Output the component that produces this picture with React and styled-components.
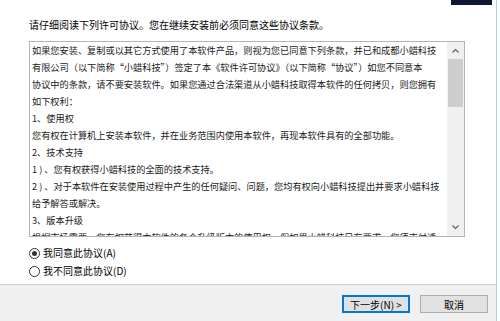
import React from 'react';
import styled, { createGlobalStyle } from 'styled-components';

const GlobalStyle = createGlobalStyle`
  html, body {
    margin: 0;
    padding: 0;
    background: #ffffff;
  }
  body {
    font-family: "Noto Sans CJK SC", "Microsoft YaHei", sans-serif;
    color: #000;
  }
`;

const lines = [
  '如果您安装、复制或以其它方式使用了本软件产品，则视为您已同意下列条款，并已和成都小蜡科技',
  '有限公司（以下简称“小蜡科技”）签定了本《软件许可协议》（以下简称“协议”）如您不同意本',
  '协议中的条款，请不要安装软件。如果您通过合法渠道从小蜡科技取得本软件的任何拷贝，则您拥有',
  '如下权利：',
  '1、使用权',
  '您有权在计算机上安装本软件，并在业务范围内使用本软件，再现本软件具有的全部功能。',
  '2、技术支持',
  '1 ) 、您有权获得小蜡科技的全面的技术支持。',
  '2 ) 、对于本软件在安装使用过程中产生的任何疑问、问题，您均有权向小蜡科技提出并要求小蜡科技',
  '给予解答或解决。',
  '3、版本升级',
  '根据市场需要，您有权获得本软件的各个升级版本的使用权，假如果小蜡科技另有要求，您须支付适',
];

export default function App() {
  return (
    <>
      <GlobalStyle />
      <Window>
        <Page>
          <Banner>
            <Logo />
          </Banner>
          <Heading>请仔细阅读下列许可协议。您在继续安装前必须同意这些协议条款。</Heading>
          <LicenseBox>
            <LicenseText>
              {lines.map((l, i) => (
                <Line key={i}>{l}</Line>
              ))}
            </LicenseText>
            <ScrollBar>
              <Arrow>
                <svg width="7" height="5" viewBox="0 0 7 5">
                  <path d="M0.5 4.5 L3.5 1.5 L6.5 4.5" fill="none" stroke="#606060" strokeWidth="1.2" />
                </svg>
              </Arrow>
              <Track>
                <Thumb />
              </Track>
              <Arrow>
                <svg width="7" height="5" viewBox="0 0 7 5">
                  <path d="M0.5 0.5 L3.5 3.5 L6.5 0.5" fill="none" stroke="#606060" strokeWidth="1.2" />
                </svg>
              </Arrow>
            </ScrollBar>
          </LicenseBox>
          <Choices>
            <Choice>
              <Radio $checked />
              我同意此协议(A)
            </Choice>
            <Choice>
              <Radio />
              我不同意此协议(D)
            </Choice>
          </Choices>
        </Page>
        <Footer>
          <Button $primary>下一步(N) &gt;</Button>
          <Button>取消</Button>
        </Footer>
      </Window>
    </>
  );
}

const Window = styled.div`
  width: 497px;
  height: 321px;
  border-right: 1px solid #a9d2ef;
  display: flex;
  flex-direction: column;
  box-sizing: border-box;
`;

const Page = styled.div`
  flex: 1;
  display: flex;
  flex-direction: column;
  padding-left: 29px;
  border-bottom: 1px solid #cfcfcf;
`;

const Banner = styled.div`
  height: 5px;
  display: flex;
  justify-content: flex-end;
  padding-right: 4px;
`;

const Logo = styled.div`
  width: 41px;
  height: 5px;
  background: #0d1733;
`;

const Heading = styled.div`
  font-size: 10px;
  line-height: 14px;
  margin-top: 13px;
  white-space: nowrap;
`;

const LicenseBox = styled.div`
  margin-top: 9px;
  width: 436px;
  height: 196px;
  box-sizing: border-box;
  border: 1px solid #b4b4b4;
  display: flex;
  overflow: hidden;
`;

const LicenseText = styled.div`
  flex: 1;
  min-width: 0;
  padding: 0 0 0 2px;
  overflow: hidden;
`;

const Line = styled.div`
  font-size: 9.2px;
  line-height: 17px;
  height: 17px;
  white-space: nowrap;
  color: #1a1a1a;
`;

const ScrollBar = styled.div`
  width: 17px;
  flex-shrink: 0;
  background: #f0f0f0;
  display: flex;
  flex-direction: column;
`;

const Arrow = styled.div`
  height: 17px;
  display: flex;
  align-items: center;
  justify-content: center;
`;

const Track = styled.div`
  flex: 1;
  padding: 0 1px;
`;

const Thumb = styled.div`
  height: 48px;
  background: #cdcdcd;
`;

const Choices = styled.div`
  margin-top: 9px;
  display: flex;
  flex-direction: column;
  gap: 4px;
`;

const Choice = styled.label`
  display: flex;
  align-items: center;
  gap: 3px;
  font-size: 10px;
  line-height: 14px;
  white-space: nowrap;
`;

const Radio = styled.span`
  width: 11px;
  height: 11px;
  box-sizing: border-box;
  border-radius: 50%;
  border: 1px solid #333;
  background: #fff;
  display: inline-flex;
  align-items: center;
  justify-content: center;
  &::after {
    content: '';
    width: 5px;
    height: 5px;
    border-radius: 50%;
    background: ${p => (p.$checked ? '#333' : 'transparent')};
  }
`;

const Footer = styled.div`
  height: 36px;
  flex-shrink: 0;
  background: #f0f0f0;
  display: flex;
  align-items: center;
  justify-content: flex-end;
  gap: 10px;
  padding-right: 8px;
`;

const Button = styled.button`
  width: 68px;
  height: 18px;
  margin-top: 2px;
  box-sizing: border-box;
  padding: 0;
  font-family: inherit;
  font-size: 10px;
  background: #e1e1e1;
  border: ${p => (p.$primary ? '2px solid #0078d7' : '1px solid #adadad')};
  color: #000;
`;
